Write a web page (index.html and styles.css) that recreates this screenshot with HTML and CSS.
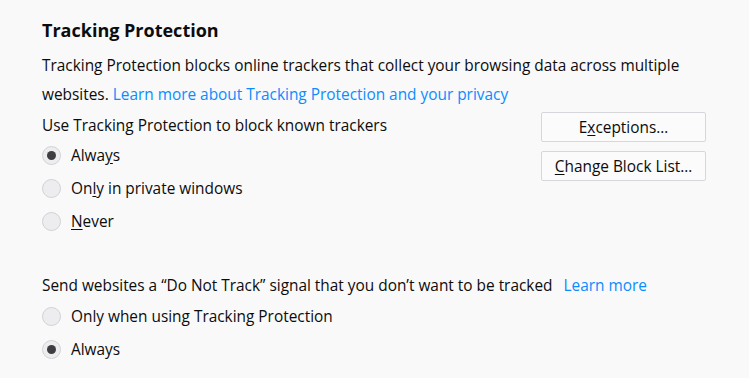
FILE: index.html
```html
<!DOCTYPE html>
<html lang="en">
<head>
<meta charset="utf-8">
<title>Tracking Protection</title>
<link rel="stylesheet" href="styles.css">
</head>
<body>
<main class="pane">
  <h2 class="title">Tracking Protection</h2>
  <p class="desc">Tracking Protection blocks online trackers that collect your browsing data across multiple websites. <a class="link" href="#">Learn more about Tracking Protection and your privacy</a></p>
  <div class="row">
    <div class="col">
      <div class="label">Use Tracking Protection to block known trackers</div>
      <div class="radio checked"><span class="dot"></span><span>Alwa<u>y</u>s</span></div>
      <div class="radio"><span class="dot"></span><span>On<u>l</u>y in private windows</span></div>
      <div class="radio"><span class="dot"></span><span><u>N</u>ever</span></div>
    </div>
    <div class="buttons">
      <button class="btn">E<u>x</u>ceptions…</button>
      <button class="btn"><u>C</u>hange Block List…</button>
    </div>
  </div>
  <div class="label dnt">Send websites a “Do Not Track” signal that you don’t want to be tracked <a class="link more" href="#">Learn more</a></div>
  <div class="radio"><span class="dot"></span><span>Only when using Tracking Protection</span></div>
  <div class="radio checked"><span class="dot"></span><span>Always</span></div>
</main>
</body>
</html>
```
FILE: styles.css
```css
html, body {
  margin: 0;
  padding: 0;
  background: #f9f9fa;
}
body {
  font-family: "Open Sans", "Noto Sans", sans-serif;
  font-size: 15.4px;
  color: #0c0c0d;
}
.pane {
  padding: 18px 43px 0 42px;
}
.title {
  margin: 0;
  font-size: 18px;
  font-weight: 700;
  line-height: 24px;
}
.desc {
  margin: 9px 0 0;
  line-height: 29px;
}
.link {
  color: #0a8dff;
  text-decoration: none;
}
.row {
  display: flex;
  justify-content: space-between;
  align-items: flex-start;
  margin-top: 3px;
}
.label {
  line-height: 28px;
}
.col .label {
  line-height: 27px;
}
.radio {
  display: flex;
  align-items: center;
  height: 33px;
}
.radio u, .btn u {
  text-decoration: underline;
  text-underline-offset: 2px;
}
.dot {
  box-sizing: border-box;
  width: 19px;
  height: 19px;
  border: 1px solid #d2d2d4;
  border-radius: 50%;
  background: #ededf0;
  margin-right: 10px;
  display: flex;
  align-items: center;
  justify-content: center;
}
.checked .dot::after {
  content: "";
  width: 9px;
  height: 9px;
  border-radius: 50%;
  background: #3d3d42;
}
.buttons {
  display: flex;
  flex-direction: column;
  gap: 9px;
  margin-top: 0;
}
.btn {
  width: 165px;
  height: 30px;
  box-sizing: border-box;
  border: 1px solid #d7d7db;
  border-radius: 2px;
  background: #fbfbfb;
  font-family: inherit;
  font-size: 15.4px;
  color: #0c0c0d;
  padding: 0;
}
.dnt {
  margin-top: 34px;
}
.more {
  margin-left: 7px;
}
```
